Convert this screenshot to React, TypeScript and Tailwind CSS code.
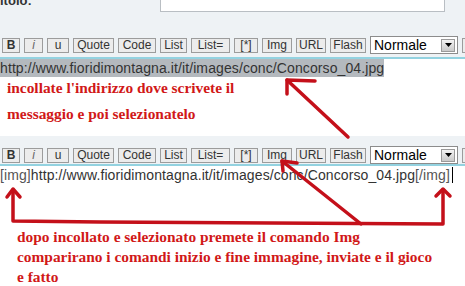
import React from 'react';

const tools = [
    { label: 'B', w: 'w-[18px]', cls: 'font-bold' },
    { label: 'i', w: 'w-[19px]', cls: 'italic text-[#666]' },
    { label: 'u', w: 'w-[22px]', cls: '' },
    { label: 'Quote', w: 'w-[41px]', cls: '' },
    { label: 'Code', w: 'w-[38px]', cls: '' },
    { label: 'List', w: 'w-[27px]', cls: '' },
    { label: 'List=', w: 'w-[39px]', cls: '' },
    { label: '[*]', w: 'w-[24px]', cls: '' },
    { label: 'Img', w: 'w-[30px]', cls: '' },
    { label: 'URL', w: 'w-[30px]', cls: '' },
    { label: 'Flash', w: 'w-[36px]', cls: '' },
];

const Toolbar: React.FC<{ className?: string }> = ({ className = '' }) => (
    <div className={`flex items-center gap-[4px] pl-[2px] h-[18px] whitespace-nowrap ${className}`}>
        {tools.map(t => (
            <span
                key={t.label}
                className={`${t.w} shrink-0 h-[15px] flex items-center justify-center border border-[#9c9c9c] bg-[#ececec] text-[12px] leading-none text-[#333] ${t.cls}`}
            >
                {t.label}
            </span>
        ))}
        <div className="w-[88px] shrink-0 h-[18px] flex items-center justify-between border border-[#8c8c8c] bg-white pl-[3px] pr-[2px]">
            <span className="text-[14px] leading-none text-black">Normale</span>
            <span className="w-[14px] h-[13px] flex items-center justify-center border border-[#9a9a9a] bg-gradient-to-b from-[#f4f4f4] to-[#c9c9c9]">
                <svg width="7" height="4" viewBox="0 0 7 4"><path d="M0 0h7L3.5 4z" fill="#000" /></svg>
            </span>
        </div>
        <span className="w-[20px] shrink-0 h-[15px] border border-[#9c9c9c] bg-[#ececec]" />
    </div>
);

const URL_TEXT = 'http://www.fioridimontagna.it/it/images/conc/Concorso_04.jpg';

export default function App() {
    const red = '#c4101a';
    return (
        <div className="relative w-[465px] h-[286px] overflow-hidden bg-white font-['Liberation_Sans',Arial,sans-serif]">
            {/* first editor */}
            <div className="h-[57px] bg-[#eef2f5] overflow-hidden">
                <div className="flex items-start -mt-[9px] h-[22px]">
                    <span className="w-[160px] pt-[2px] text-[13px] leading-[16px] font-bold text-[#333]">itolo:</span>
                    <div className="w-[285px] h-[21px] bg-white border border-[#b9bec3]" />
                </div>
                <Toolbar className="mt-[23px]" />
            </div>
            <div className="h-[2px] bg-[#93d2e0]" />
            <div className="h-[77px]">
                <div className="h-[18px] leading-[18px] text-[14px] tracking-[0.1px] text-[#333]">
                    <span className="bg-[#b4b9be] inline-block">{URL_TEXT}</span>
                </div>
                <p className="-mt-[2px] pl-[7px] leading-[26px] text-[15.4px] font-bold text-[#d11818] font-['Liberation_Serif','Times_New_Roman',serif]">
                    incollate l'indirizzo dove scrivete il
                    <br />
                    messaggio e poi selezionatelo
                </p>
            </div>

            {/* second editor */}
            <div className="h-[28px] bg-[#eef2f5] pt-[10px] overflow-hidden">
                <Toolbar />
            </div>
            <div className="h-[2px] bg-[#93d2e0]" />
            <div>
                <div className="h-[18px] leading-[18px] text-[14px] tracking-[0.1px] text-[#333] whitespace-nowrap flex items-center">
                    <span className="text-[#555]">[img]</span>
                    <span>{URL_TEXT}</span>
                    <span className="text-[#555]">[/img]</span>
                    <span className="ml-[2px] w-px h-[16px] bg-black" />
                </div>
                <p className="mt-[43px] pl-[17px] leading-[20px] text-[15.4px] font-bold text-[#d11818] font-['Liberation_Serif','Times_New_Roman',serif]">
                    dopo incollato e selezionato premete il comando Img
                    <br />
                    comparirano i comandi inizio e fine immagine, inviate e il gioco
                    <br />
                    e fatto
                </p>
            </div>

            {/* hand-drawn arrows */}
            <svg className="absolute inset-0 pointer-events-none" width="465" height="286" viewBox="0 0 465 286">
                <g stroke={red} strokeWidth="3.5" fill="none" strokeLinecap="round" strokeLinejoin="round">
                    <path d="M287 80 L348 137" />
                    <path d="M315 81 L287 80 L287 94" />
                    <path d="M282 161 L361 224" />
                    <path d="M297 163 L282 161 L283 171" />
                    <path d="M13 190 L13 221 L100 222 L443 224 L443 190" />
                    <path d="M7 197 L13 189 L20 197" />
                    <path d="M436 196 L443 189 L450 196" />
                </g>
            </svg>
        </div>
    );
}
